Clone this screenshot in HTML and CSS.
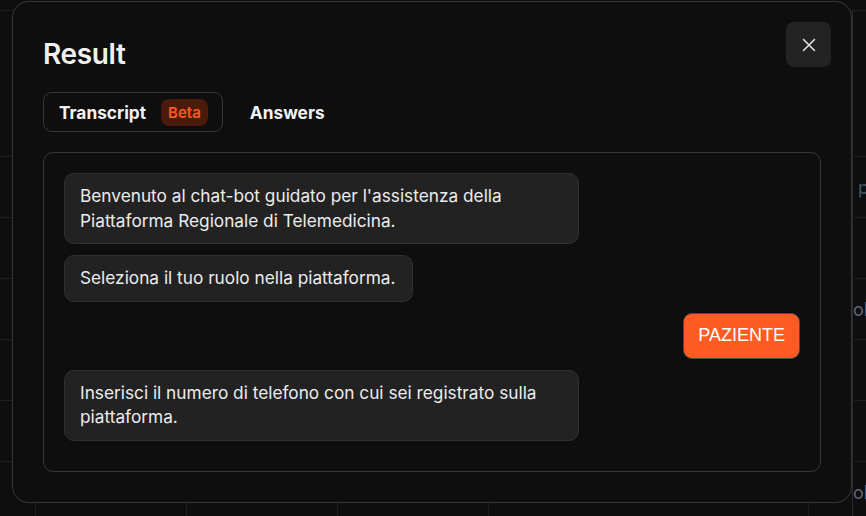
FILE: index.html
```html
<!DOCTYPE html>
<html lang="it">
<head>
<meta charset="utf-8">
<title>Result</title>
<link rel="stylesheet" href="styles.css">
</head>
<body>
<div class="bg">
  <div class="row row-top"><div></div><div></div><div></div><div></div><div></div><div></div><div></div></div>
  <div class="row row-head"><div></div><div></div><div></div><div></div><div></div><div></div><div></div></div>
  <div class="row"><div></div><div></div><div></div><div></div><div></div><div></div><div class="bg-text bg-blue">p</div></div>
  <div class="row"><div></div><div></div><div></div><div></div><div></div><div></div><div></div></div>
  <div class="row"><div></div><div></div><div></div><div></div><div></div><div></div><div class="bg-text bg-tight">ob</div></div>
  <div class="row"><div></div><div></div><div></div><div></div><div></div><div></div><div></div></div>
  <div class="row"><div></div><div></div><div></div><div></div><div></div><div></div><div></div></div>
  <div class="row"><div></div><div></div><div></div><div></div><div></div><div></div><div class="bg-text bg-tight">ob</div></div>
</div>

<div class="modal">
  <h1 class="title">Result</h1>
  <button class="close" aria-label="Close">
    <svg width="14" height="14" viewBox="0 0 14 14"><path d="M1.5 1.5 L12.5 12.5 M12.5 1.5 L1.5 12.5" stroke="#e6e6e6" stroke-width="1.5" stroke-linecap="round" fill="none"/></svg>
  </button>
  <div class="tabs">
    <div class="tab active">Transcript <span class="badge">Beta</span></div>
    <div class="tab">Answers</div>
  </div>
  <div class="panel">
    <div class="msg bot">Benvenuto al chat-bot guidato per l'assistenza della Piattaforma Regionale di Telemedicina.</div>
    <div class="msg bot">Seleziona il tuo ruolo nella piattaforma.</div>
    <div class="msg user">PAZIENTE</div>
    <div class="msg bot">Inserisci il numero di telefono con cui sei registrato sulla piattaforma.</div>
  </div>
</div>
</body>
</html>
```

FILE: styles.css
```css
* { box-sizing: border-box; }
html, body { margin: 0; padding: 0; }
body {
  width: 866px;
  height: 516px;
  overflow: hidden;
  background: #0e0e0e;
  font-family: Inter, "Noto Sans", sans-serif;
  color: #ececec;
  position: relative;
}

/* background table */
.bg { display: flex; flex-direction: column; }
.row {
  display: grid;
  grid-template-columns: 35px 151px 151px 151px 320px 44px 1fr;
  height: 61px;
  border-bottom: 1px solid #1e1e1e;
}
.row > div { border-left: 1px solid #1e1e1e; }
.row > div:first-child { border-left: none; }
.row-top { height: 11px; }
.row-top > div { border-left: none; }
.row-head { height: 146px; }
.row-head > div { border-left: none; }
.row-head > div:last-child { border-left: 1px solid #2a2a2a; }
.row > div:last-child { border-left-color: #2a2a2a; }
.bg-text {
  display: flex;
  align-items: center;
  padding-left: 5px;
  font-size: 18px;
  color: #5d6575;
}
.bg-tight { padding-left: 0; }
.bg-blue { color: #3f5868; }

/* modal */
.modal {
  position: absolute;
  left: 12px;
  top: 1px;
  width: 840px;
  height: 502px;
  background: #0e0e0e;
  border: 1px solid #363636;
  border-radius: 16px;
  padding: 36px 30px 0 30px;
}
.title {
  margin: 0;
  font-size: 28px;
  line-height: 32px;
  font-weight: 600;
  letter-spacing: -0.35px;
  color: #f0f0f0;
}
.close {
  position: absolute;
  top: 20px;
  right: 20px;
  width: 45px;
  height: 45px;
  border: none;
  border-radius: 8px;
  background: #232323;
  display: flex;
  align-items: center;
  justify-content: center;
  padding: 0;
}
.close svg { display: block; }

.tabs {
  display: flex;
  gap: 11px;
  margin-top: 22px;
}
.tab {
  height: 40px;
  display: flex;
  align-items: center;
  gap: 15px;
  padding: 0 14px 0 15px;
  border: 1px solid transparent;
  border-radius: 9px;
  font-size: 17.3px;
  font-weight: 700;
  letter-spacing: 0;
  color: #f2f2f2;
}
.tab.active { border-color: #363636; }
.badge {
  height: 27px;
  display: flex;
  align-items: center;
  padding: 0 7px;
  border-radius: 8px;
  background: #4a1a0b;
  color: #ff5a1f;
  font-size: 15px;
  font-weight: 600;
  letter-spacing: 0;
}

.panel {
  margin-top: 20px;
  height: 320px;
  border: 1px solid #363636;
  border-radius: 10px;
  padding: 20px 20px;
  display: flex;
  flex-direction: column;
  align-items: flex-start;
  gap: 11px;
}
.msg {
  max-width: 70%;
  border-radius: 10px;
  font-size: 17.25px;
  line-height: 24.5px;
}
.msg.bot {
  background: #222222;
  border: 1px solid #313131;
  padding: 10px 16px 10px 15px;
  color: #ececec;
  letter-spacing: 0;
}
.msg.user {
  align-self: flex-end;
  background: #ff5b23;
  border: 1px solid #4a4a4a;
  border-radius: 9px;
  padding: 10px 14px 11px;
  font-family: "Liberation Sans", Arial, sans-serif;
  font-size: 18px;
  line-height: 23px;
  color: #ffffff;
}
```
